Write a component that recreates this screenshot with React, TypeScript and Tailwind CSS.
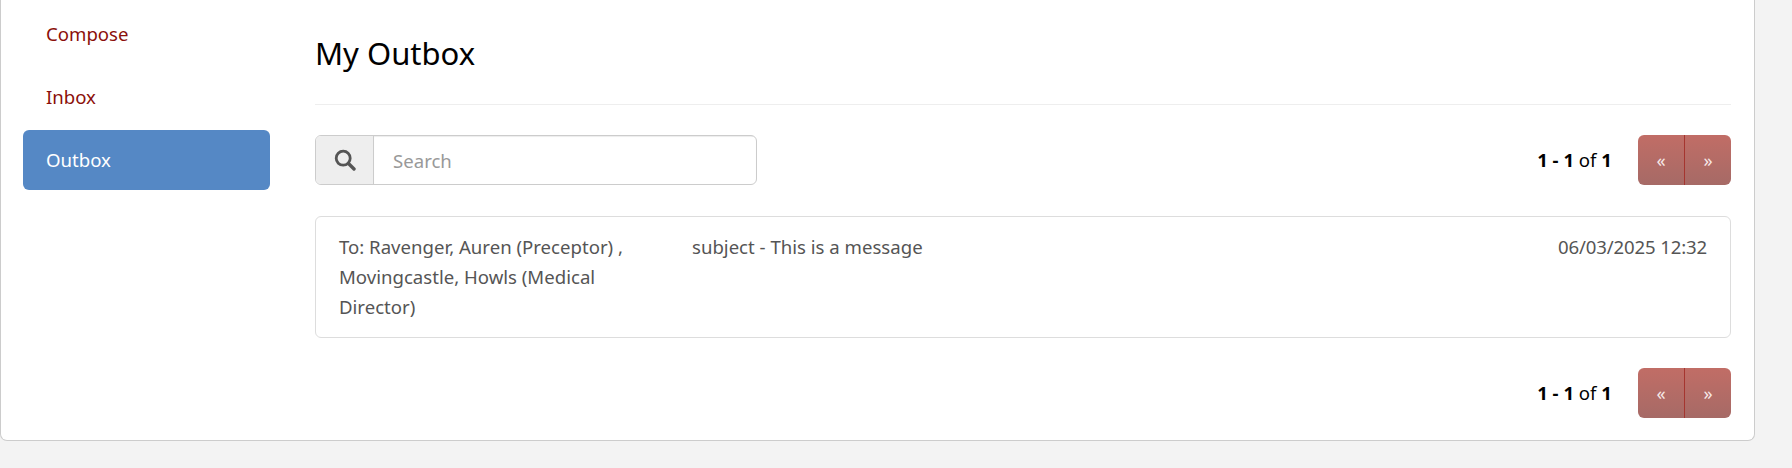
function Pager() {
  return (
    <div className="flex items-center justify-end h-[50px]">
      <div className="text-[18.6px] text-black mr-[26px]">
        <b className="font-bold">1 - 1</b> of <b className="font-bold">1</b>
      </div>
      <div className="flex w-[93px] h-[50px] rounded-[6px] overflow-hidden bg-gradient-to-b from-[#c16d66] to-[#a66a66] text-[#f7e8e6] text-[18px]">
        <div className="w-[46px] flex items-center justify-center border-r border-[#a5352f] box-content">«</div>
        <div className="flex-1 flex items-center justify-center">»</div>
      </div>
    </div>
  );
}

export default function App() {
  return (
    <div className="h-[468px] overflow-hidden bg-[#f3f3f3] font-['Noto_Sans','Open_Sans',sans-serif] text-[18.6px]">
      <div className="w-[1755px] h-[441px] bg-white border-x border-b border-[#cccccc] rounded-b-[7px] flex pl-[22px] pr-[23px] pt-[4px] gap-[45px]">
        <nav className="w-[247px] shrink-0 flex flex-col gap-[3px]">
          <a className="h-[60px] flex items-center px-[23px] text-[#8b0f0a]">Compose</a>
          <a className="h-[60px] flex items-center px-[23px] text-[#8b0f0a]">Inbox</a>
          <a className="h-[60px] flex items-center px-[23px] text-white bg-[#5588c5] rounded-[6px]">Outbox</a>
        </nav>
        <main className="flex-1 flex flex-col">
          <div className="h-[101px] border-b border-[#eeeeee]">
            <h1 className="text-[31px] leading-[40px] pt-[29px] text-black box-content">My Outbox</h1>
          </div>
          <div className="mt-[30px] flex items-center justify-between">
            <div className="flex w-[442px] h-[50px] border border-[#cccccc] rounded-[6px] overflow-hidden">
              <div className="w-[58px] bg-[#eeeeee] border-r border-[#cccccc] flex items-center justify-center text-[#555555]">
                <svg width="22" height="22" viewBox="0 0 22 22" fill="none" stroke="currentColor">
                  <circle cx="9.2" cy="9.2" r="7" strokeWidth="2.8" />
                  <path d="M14.5 14.5L20 20" strokeWidth="3.4" strokeLinecap="round" />
                </svg>
              </div>
              <div className="flex-1 flex items-center pl-[19px] pt-[1px] text-[#999999] shadow-[inset_0_1px_1px_rgba(0,0,0,0.075)]">Search</div>
            </div>
            <Pager />
          </div>
          <div className="mt-[31px] h-[122px] border border-[#dddddd] rounded-[6px] flex pl-[23px] pr-[23px] pt-[15px] text-[#555555] leading-[30px]">
            <div className="w-[300px] shrink-0">To: Ravenger, Auren (Preceptor) , Movingcastle, Howls (Medical Director)</div>
            <div className="ml-[53px] flex-1">subject - This is a message</div>
            <div className="tracking-[-0.15px]">06/03/2025 12:32</div>
          </div>
          <div className="mt-[30px]">
            <Pager />
          </div>
        </main>
      </div>
    </div>
  );
}
